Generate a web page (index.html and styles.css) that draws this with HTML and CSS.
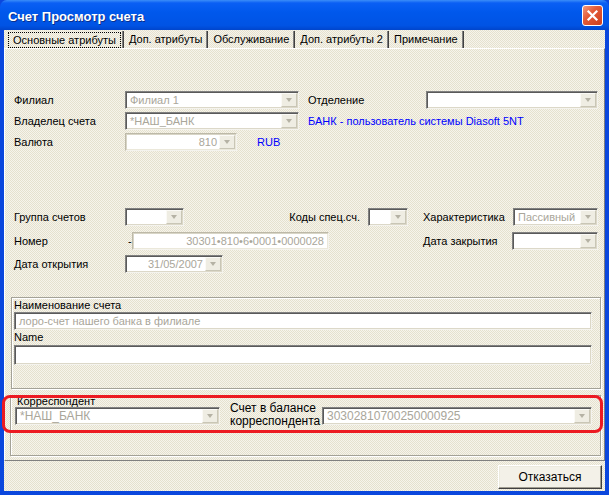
FILE: index.html
```html
<!DOCTYPE html>
<html>
<head>
<meta charset="utf-8">
<title>Счет Просмотр счета</title>
<link rel="stylesheet" href="styles.css">
</head>
<body>
<div class="window">
  <div class="titlebar">
    <span class="title">Счет Просмотр счета</span>
    <span class="close"><svg width="13" height="13" viewBox="0 0 13 13"><path d="M2.5 2.5L10.5 10.5M10.5 2.5L2.5 10.5" stroke="#fff" stroke-width="2.2" stroke-linecap="square"/></svg></span>
  </div>
  <div class="client">
    <div class="tabs">
      <div class="tab active"><span class="focus">Основные атрибуты</span></div>
      <div class="tab">Доп. атрибуты</div>
      <div class="tab">Обслуживание</div>
      <div class="tab">Доп. атрибуты 2</div>
      <div class="tab">Примечание</div>
    </div>
    <div class="panel">
      <div class="row r1">
        <span class="lbl">Филиал</span>
        <div class="combo w174"><span class="val">Филиал 1</span><span class="btn"></span></div>
        <span class="lbl-right w118">Отделение</span>
        <div class="combo w172"><span class="val"></span><span class="btn"></span></div>
      </div>
      <div class="row r2">
        <span class="lbl">Владелец счета</span>
        <div class="combo w174"><span class="val">*НАШ_БАНК</span><span class="btn"></span></div>
        <span class="link gap9">БАНК - пользователь системы Diasoft 5NT</span>
      </div>
      <div class="row r3">
        <span class="lbl">Валюта</span>
        <div class="combo light w112"><span class="val right">810</span><span class="btn"></span></div>
        <span class="link gap20">RUB</span>
      </div>
      <div class="row r4">
        <span class="lbl">Группа счетов</span>
        <div class="combo w59"><span class="val"></span><span class="btn"></span></div>
        <span class="lbl-end w176">Коды спец.сч.</span>
        <div class="combo w40"><span class="val"></span><span class="btn"></span></div>
        <span class="lbl-right gap15 w90">Характеристика</span>
        <div class="combo w85"><span class="val">Пассивный</span><span class="btn"></span></div>
      </div>
      <div class="row r5">
        <span class="lbl">Номер</span>
        <span class="dash">-</span>
        <div class="edit light w197"><span class="val right">30301•810•6•0001•0000028</span></div>
        <span class="lbl-right gap94 w89">Дата закрытия</span>
        <div class="combo w86"><span class="val"></span><span class="btn"></span></div>
      </div>
      <div class="row r6">
        <span class="lbl">Дата открытия</span>
        <div class="combo w98"><span class="val right">31/05/2007</span><span class="btn"></span></div>
      </div>
      <div class="group names">
        <div class="glabel">Наименование счета</div>
        <div class="edit wide h18"><span class="val">лоро-счет нашего банка в филиале</span></div>
        <div class="glabel tall">Name</div>
        <div class="edit wide h20"><span class="val"></span></div>
      </div>
      <div class="group corr">
        <div class="col">
          <div class="glabel small">Корреспондент</div>
          <div class="combo w205"><span class="val big">*НАШ_БАНК</span><span class="btn"></span></div>
        </div>
        <div class="twoline">Счет в балансе<br>корреспондента</div>
        <div class="col pad">
          <div class="combo w270"><span class="val big">30302810700250000925</span><span class="btn"></span></div>
        </div>
      </div>
    </div>
    <div class="footer">
      <div class="button">Отказаться</div>
    </div>
  </div>
  <div class="annot"></div>
</div>
</body>
</html>
```
FILE: styles.css
```css
* { box-sizing: border-box; margin: 0; padding: 0; }
html, body { width: 609px; height: 495px; overflow: hidden; }
body {
  font-family: "Liberation Sans", Arial, sans-serif;
  font-size: 11px;
  color: #000;
  background: #fff;
}
.window {
  position: relative;
  width: 609px;
  height: 495px;
  display: flex;
  flex-direction: column;
  background: #0b47dd;
}
.titlebar {
  height: 30px;
  flex: none;
  display: flex;
  align-items: center;
  justify-content: space-between;
  padding: 2px 6px 0 8px;
  background: linear-gradient(#3b8df8 0, #0a5ff4 3px, #0058ec 40%, #0053e4 85%, #0045cc 100%);
  border-radius: 7px 7px 0 0;
}
.title {
  color: #fff;
  font-weight: bold;
  font-size: 13px;
  text-shadow: 1px 1px 0 #0b2f8a;
}
.close {
  width: 21px;
  height: 21px;
  margin-top: -2px;
  border: 1px solid #fff;
  border-radius: 3px;
  background: linear-gradient(135deg, #f09a7e 0, #e35b38 40%, #cf3f1c 100%);
  display: flex;
  align-items: center;
  justify-content: center;
}
.client {
  flex: 1;
  margin: 0 4px 4px 4px;
  display: flex;
  flex-direction: column;
  background-color: #edeadc;
  background-image: repeating-conic-gradient(#f6f4ec 0 25%, #e5e1ce 0 50%);
  background-size: 2px 2px;
}
.tabs {
  display: flex;
  height: 17px;
  margin-top: 1px;
  padding-left: 2px;
}
.tab {
  line-height: 17px;
  padding: 0 4px 0 5px;
  border-right: 1px solid #808080;
  box-shadow: 1px 0 0 #404040;
  margin-right: 1px;
  white-space: nowrap;
}
.tab.active { padding: 1px 1px 0 2px; }
.focus {
  display: block;
  line-height: 14px;
  padding: 0 4px;
  border: 1px dotted #000;
}
.panel {
  height: 413px;
  flex: none;
  border-top: 1px solid #fff;
  border-left: 1px solid #fff;
  border-right: 1px solid #808080;
  border-bottom: 1px solid #808080;
  padding-left: 9px;
}
.row {
  display: flex;
  align-items: center;
  height: 18px;
}
.r1 { margin-top: 42px; }
.r2 { margin-top: 3px; }
.r3 { margin-top: 3px; }
.r4 { margin-top: 57px; }
.r5 { margin-top: 6px; }
.r6 { margin-top: 5px; }
.lbl { width: 111px; flex: none; white-space: nowrap; }
.lbl-right { flex: none; white-space: nowrap; margin-left: 9px; }
.lbl-end { flex: none; text-align: right; margin-right: 8px; white-space: nowrap; }
.gap9 { margin-left: 9px; }
.gap15 { margin-left: 15px; }
.gap20 { margin-left: 20px; }
.gap94 { margin-left: 94px; }
.link { color: #0000ff; white-space: nowrap; }
.dash { width: 7px; flex: none; padding-left: 3px; line-height: 18px; }

.combo, .edit {
  flex: none;
  display: flex;
  height: 18px;
  background: #fff;
  border: 1px solid;
  border-color: #808080 #f4f3ee #f4f3ee #808080;
  box-shadow: inset 1px 1px 0 #5a5a5a, inset -1px -1px 0 #dcd8c8;
  padding: 2px;
}
.combo.light, .edit.light {
  border-color: #bdb9a8 #f4f3ee #f4f3ee #bdb9a8;
  box-shadow: inset 1px 1px 0 #d8d5c6, inset -1px -1px 0 #ebe8da;
}
.val {
  flex: 1;
  min-width: 0;
  color: #a9a69a;
  line-height: 13px;
  padding-left: 2px;
  white-space: nowrap;
}
.val.right { text-align: right; padding-right: 2px; }
.val.big { font-size: 12px; }
.btn {
  width: 16px;
  flex: none;
  height: 14px;
  margin: -1px -1px 0 0;
  background: #efede3;
  border: 1px solid;
  border-color: #fbfaf6 #c9c6b6 #c9c6b6 #fbfaf6;
  display: flex;
  align-items: center;
  justify-content: center;
}
.btn::after {
  content: "";
  border-left: 3.5px solid transparent;
  border-right: 3.5px solid transparent;
  border-top: 4px solid #b5b2a4;
}
.w40 { width: 40px; }
.w59 { width: 59px; }
.w85 { width: 85px; }
.w86 { width: 86px; }
.w89 { width: 89px; }
.w90 { width: 90px; }
.w98 { width: 98px; }
.w112 { width: 112px; }
.w118 { width: 118px; }
.w172 { width: 172px; }
.w174 { width: 174px; }
.w176 { width: 176px; }
.w197 { width: 197px; }
.w205 { width: 205px; }
.w270 { width: 270px; }

.group {
  border: 1px solid #a4a297;
  box-shadow: inset 1px 1px 0 #fff, 1px 1px 0 #fff;
}
.names {
  margin: 24px 0 0 -3px;
  width: 590px;
  height: 92px;
  padding: 0 8px 0 2px;
}
.glabel { line-height: 14px; white-space: nowrap; }
.glabel.tall { line-height: 15px; }
.glabel.small { line-height: 11px; height: 11px; margin-left: 2px; }
.edit.wide { width: 578px; }
.edit.h18 { height: 18px; }
.edit.h20 { height: 20px; }
.corr {
  margin: 6px 0 0 -4px;
  width: 591px;
  height: 61px;
  padding: 0 0 0 4px;
  display: flex;
  align-items: flex-start;
}
.col { display: flex; flex-direction: column; flex: none; }
.col.pad { padding-top: 11px; }
.twoline {
  width: 92px;
  flex: none;
  margin: 6px 0 0 10px;
  font-size: 12px;
  line-height: 13px;
  white-space: nowrap;
}
.footer {
  flex: 1;
  display: flex;
  justify-content: flex-end;
  align-items: flex-start;
  padding: 4px 3px 0 0;
}
.button {
  width: 104px;
  height: 24px;
  font-size: 12px;
  line-height: 22px;
  text-align: center;
  background: #f3f1e8;
  border: 1px solid;
  border-color: #fff #404040 #404040 #fff;
  box-shadow: inset -1px -1px 0 #a09d90, inset 1px 1px 0 #eceadf;
}
.annot {
  position: absolute;
  left: 2px;
  top: 395px;
  width: 601px;
  height: 38px;
  border: 3px solid #ec1a22;
  border-radius: 8px;
  pointer-events: none;
}
```
